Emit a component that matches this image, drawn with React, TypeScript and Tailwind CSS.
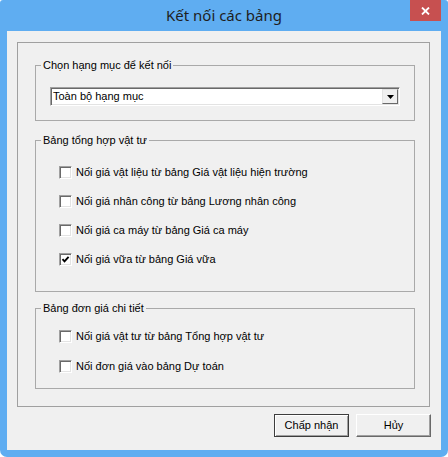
import React from "react";

const font = { fontFamily: '"Liberation Sans", Arial, sans-serif' };

function CheckBox({ checked }: { checked?: boolean }) {
  return (
    <span className="flex h-[13px] w-[13px] shrink-0 items-center justify-center border border-t-[#a0a0a0] border-l-[#a0a0a0] border-r-white border-b-white bg-white shadow-[inset_1px_1px_0_#696969,inset_-1px_-1px_0_#e3e3e3]">
      {checked && (
        <svg width="9" height="9" viewBox="0 0 9 9">
          <path d="M1.5 4.2 L3.5 6.3 L7.6 1.8" fill="none" stroke="#000" strokeWidth="1.9" />
        </svg>
      )}
    </span>
  );
}

function Row({ label, checked, h }: { label: string; checked?: boolean; h: string }) {
  return (
    <div className={`flex items-center gap-[4px] ${h}`}>
      <CheckBox checked={checked} />
      <span className="text-[11px] leading-[13px] text-black">{label}</span>
    </div>
  );
}

function Group({
  title,
  className,
  children,
}: {
  title: string;
  className: string;
  children: React.ReactNode;
}) {
  return (
    <fieldset className={`border border-[#a9a9a9] p-0 ${className}`}>
      <legend className="ml-[5px] px-[2px] text-[11px] leading-[14px] text-black">{title}</legend>
      {children}
    </fieldset>
  );
}

export default function App() {
  return (
    <div className="h-[457px] w-[448px] bg-white" style={font}>
      <div className="flex h-[457px] w-[448px] flex-col rounded-t-[3px] rounded-b-[7px] bg-[#5fadf1]">
        <div className="grid h-[31px] grid-cols-[38px_1fr_38px]">
          <div />
          <div
            className="pt-[5px] text-center text-[15px] leading-[20px] text-[#1e1e1e]"
            style={{ fontFamily: '"Noto Sans", "Open Sans", sans-serif' }}
          >
            Kết nối các bảng
          </div>
          <div className="flex h-[21px] w-[31px] items-center justify-center bg-[#c75050]">
            <svg width="9" height="8" viewBox="0 0 9 8">
              <path d="M1 0.5 L8 7.5 M8 0.5 L1 7.5" stroke="#fff" strokeWidth="1.8" />
            </svg>
          </div>
        </div>

        <div className="mx-[7px] flex h-[419px] flex-col bg-[#f0f0f0] pt-[11px]">
          <div className="ml-[10px] h-[365px] w-[413px] border border-[#a0a0a0] pt-[15px] pl-[17px] pr-[14px] pb-[17px]">
            <Group title="Chọn hạng mục để kết nối" className="w-[380px]">
              <div className="px-[14px] pt-[15px] pb-[14px]">
                <div className="flex h-[19px] w-[350px] border border-t-[#a0a0a0] border-l-[#a0a0a0] border-r-white border-b-white bg-white shadow-[inset_1px_1px_0_#696969,inset_-1px_-1px_0_#e3e3e3]">
                  <div className="flex-1 pl-[2px] pt-[2px] text-[11px] leading-[13px] text-black">
                    Toàn bộ hạng mục
                  </div>
                  <div className="mt-[1px] mr-[1px] mb-[1px] flex w-[16px] items-center justify-center border border-t-[#e3e3e3] border-l-[#e3e3e3] border-r-[#696969] border-b-[#696969] bg-[#f0f0f0]">
                    <svg width="7" height="4" viewBox="0 0 7 4">
                      <path d="M0 0 H7 L3.5 4 Z" fill="#000" />
                    </svg>
                  </div>
                </div>
              </div>
            </Group>

            <Group title="Bảng tổng hợp vật tư" className="mt-[12px] w-[380px]">
              <div className="pl-[23px] pt-[11px] pb-[17px]">
                <Row h="h-[29px]" label="Nối giá vật liệu từ bảng Giá vật liệu hiện trường" />
                <Row h="h-[29px]" label="Nối giá nhân công từ bảng Lương nhân công" />
                <Row h="h-[29px]" label="Nối giá ca máy từ bảng Giá ca máy" />
                <Row h="h-[29px]" label="Nối giá vữa từ bảng Giá vữa" checked />
              </div>
            </Group>

            <Group title="Bảng đơn giá chi tiết" className="mt-[9px] w-[380px]">
              <div className="pl-[23px] pt-[6px] pb-[7px]">
                <Row h="h-[30px]" label="Nối giá vật tư từ bảng Tổng hợp vật tư" />
                <Row h="h-[30px]" label="Nối đơn giá vào bảng Dự toán" />
              </div>
            </Group>
          </div>

          <div className="mt-[7px] flex justify-end gap-[7px] pr-[10px]">
            <div className="flex h-[23px] w-[75px] items-center justify-center border border-[#3c3c3c] bg-[#f0f0f0] text-[11px] text-black shadow-[inset_1px_1px_0_#fff,inset_-1px_-1px_0_#a0a0a0]">
              Chấp nhận
            </div>
            <div className="flex h-[23px] w-[75px] items-center justify-center border border-t-white border-l-white border-r-[#696969] border-b-[#696969] bg-[#f0f0f0] text-[11px] text-black shadow-[inset_-1px_-1px_0_#a0a0a0]">
              Hủy
            </div>
          </div>
        </div>
      </div>
    </div>
  );
}
